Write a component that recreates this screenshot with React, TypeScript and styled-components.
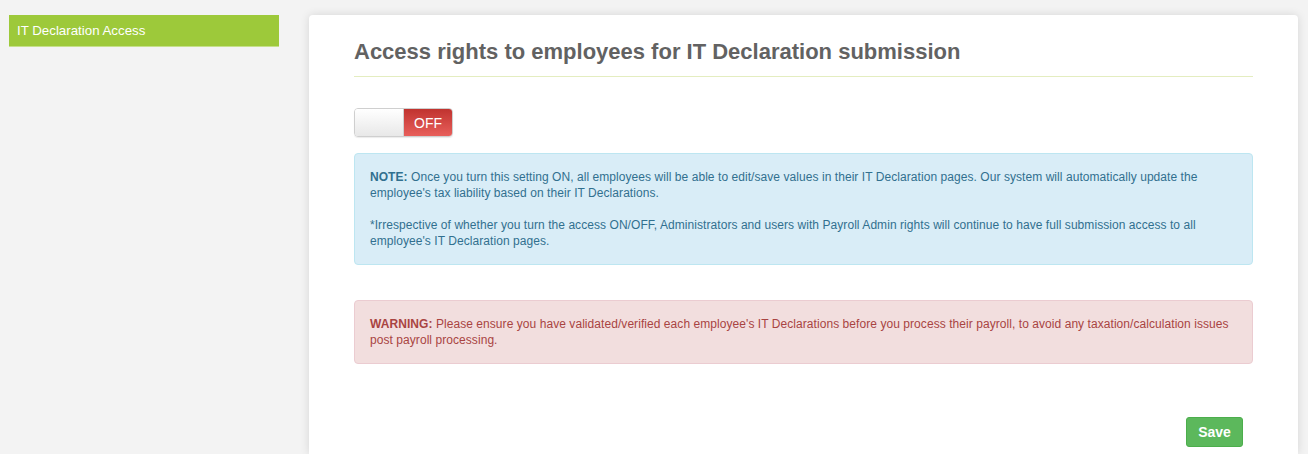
import React from "react";
import styled, { createGlobalStyle } from "styled-components";

const Global = createGlobalStyle`
  html, body { margin: 0; padding: 0; }
  body {
    background: #f3f3f3;
    font-family: "Liberation Sans", Arial, Helvetica, sans-serif;
    font-size: 12px;
    color: #333;
  }
  * { box-sizing: border-box; }
`;

const Page = styled.div`
  display: flex;
  align-items: flex-start;
  gap: 30px;
  padding: 15px 10px 0 9px;
  min-height: 454px;
`;

const Sidebar = styled.nav`
  width: 270px;
  flex: 0 0 270px;
`;

const NavItem = styled.div<{ $active?: boolean }>`
  height: 32px;
  display: flex;
  align-items: center;
  padding: 0 8px;
  background: ${(p) => (p.$active ? "#9dc93a" : "transparent")};
  border-bottom: 1px solid #c5e08a;
  color: #fff;
  font-size: 13.3px;
`;

const Card = styled.main`
  flex: 1;
  background: #fff;
  border-radius: 4px 4px 0 0;
  box-shadow: 0 0 10px rgba(0, 0, 0, 0.12);
  padding: 25px 45px 0 45px;
  min-height: 439px;
`;

const Title = styled.h2`
  margin: 0;
  font-size: 22px;
  line-height: 24px;
  font-weight: bold;
  color: #626262;
  padding-bottom: 12px;
  border-bottom: 1px solid #e4edc0;
`;

const Toggle = styled.div`
  margin-top: 31px;
  width: 99px;
  height: 29px;
  display: flex;
  border: 1px solid #cfcfcf;
  border-radius: 4px;
  overflow: hidden;
  box-shadow: 0 1px 1px rgba(0, 0, 0, 0.08);
`;

const ToggleHandle = styled.div`
  width: 49px;
  background: linear-gradient(#ffffff, #e8e8e8);
  border-right: 1px solid #d0d0d0;
`;

const ToggleLabel = styled.div`
  flex: 1;
  display: flex;
  align-items: center;
  justify-content: center;
  color: #fff;
  font-size: 14px;
  background: linear-gradient(#c0332f, #e85f5b);
`;

const Alert = styled.div<{ $kind: "info" | "danger" }>`
  margin-top: ${(p) => (p.$kind === "info" ? "16px" : "35px")};
  padding: 15px;
  border: 1px solid ${(p) => (p.$kind === "info" ? "#bde6f1" : "#ebccd1")};
  background: ${(p) => (p.$kind === "info" ? "#d9edf7" : "#f2dede")};
  color: ${(p) => (p.$kind === "info" ? "#31708f" : "#a94442")};
  border-radius: 4px;
  font-size: 12px;
  line-height: 16px;
  letter-spacing: 0.06px;
`;

const Para = styled.p`
  margin: 0;
  & + & { margin-top: 16px; }
`;

const Footer = styled.div`
  display: flex;
  justify-content: flex-end;
  padding-right: 10px;
  margin-top: 53px;
`;

const SaveButton = styled.button`
  width: 57px;
  height: 30px;
  background: #5cb85c;
  border: 1px solid #4cae4c;
  border-radius: 3px;
  color: #fff;
  font-family: "Liberation Sans", Arial, sans-serif;
  font-weight: bold;
  font-size: 14px;
  cursor: pointer;
`;

export default function App() {
  return (
    <>
      <Global />
      <Page>
        <Sidebar>
          <NavItem $active>IT Declaration Access</NavItem>
        </Sidebar>
        <Card>
          <Title>Access rights to employees for IT Declaration submission</Title>
          <Toggle>
            <ToggleHandle />
            <ToggleLabel>OFF</ToggleLabel>
          </Toggle>
          <Alert $kind="info">
            <Para>
              <b>NOTE:</b> Once you turn this setting ON, all employees will be able to edit/save values in
              their IT Declaration pages. Our system will automatically update the employee's tax liability
              based on their IT Declarations.
            </Para>
            <Para>
              *Irrespective of whether you turn the access ON/OFF, Administrators and users with Payroll Admin
              rights will continue to have full submission access to all employee's IT Declaration pages.
            </Para>
          </Alert>
          <Alert $kind="danger">
            <b>WARNING:</b> Please ensure you have validated/verified each employee's IT Declarations before you
            process their payroll, to avoid any taxation/calculation issues post payroll processing.
          </Alert>
          <Footer>
            <SaveButton>Save</SaveButton>
          </Footer>
        </Card>
      </Page>
    </>
  );
}
